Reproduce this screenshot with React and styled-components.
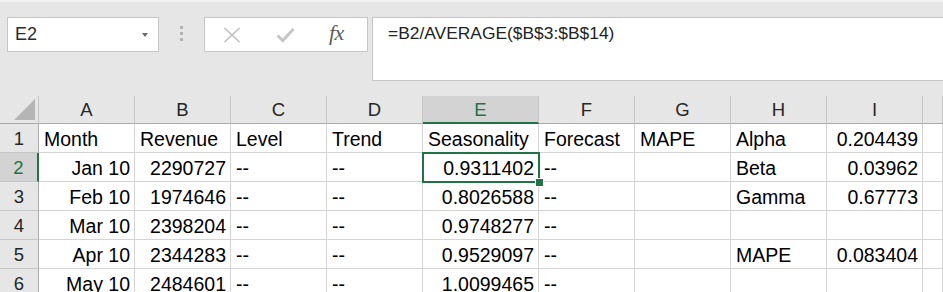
import * as React from "react";
import styled, { createGlobalStyle } from "styled-components";

const GlobalStyle = createGlobalStyle`
  html, body {
    margin: 0;
    padding: 0;
    background: #fff;
    overflow: hidden;
  }
  body {
    font-family: "Liberation Sans", Arial, sans-serif;
  }
`;

const columns = ["A", "B", "C", "D", "E", "F", "G", "H", "I", ""];

// [text, align] per cell, "r" = right aligned
const rows = [
  [["Month"], ["Revenue"], ["Level"], ["Trend"], ["Seasonality"], ["Forecast"], ["MAPE"], ["Alpha"], ["0.204439", "r"], [""]],
  [["Jan 10", "r"], ["2290727", "r"], ["--"], ["--"], ["0.9311402", "r"], ["--"], [""], ["Beta"], ["0.03962", "r"], [""]],
  [["Feb 10", "r"], ["1974646", "r"], ["--"], ["--"], ["0.8026588", "r"], ["--"], [""], ["Gamma"], ["0.67773", "r"], [""]],
  [["Mar 10", "r"], ["2398204", "r"], ["--"], ["--"], ["0.9748277", "r"], ["--"], [""], [""], [""], [""]],
  [["Apr 10", "r"], ["2344283", "r"], ["--"], ["--"], ["0.9529097", "r"], ["--"], [""], ["MAPE"], ["0.083404", "r"], [""]],
  [["May 10", "r"], ["2484601", "r"], ["--"], ["--"], ["1.0099465", "r"], ["--"], [""], [""], [""], [""]],
];

function App() {
  return (
    <Wrapper>
      <GlobalStyle />
      <Toolbar>
        <NameBox>
          <NameText>E2</NameText>
          <DropArrow />
        </NameBox>
        <Grip>
          <Dot />
          <Dot />
          <Dot />
        </Grip>
        <ButtonBox>
          <IconButton>
            <svg width="18" height="16" viewBox="0 0 18 16">
              <path d="M1.5 1 L16.5 15 M16.5 1 L1.5 15" stroke="#bfbfbf" strokeWidth="1.6" fill="none" />
            </svg>
          </IconButton>
          <IconButton>
            <svg width="19" height="16" viewBox="0 0 19 16">
              <path d="M1.5 8.5 L6.8 13.5 L17.5 2" stroke="#c6c6c6" strokeWidth="3" fill="none" />
            </svg>
          </IconButton>
          <FxButton>fx</FxButton>
        </ButtonBox>
        <FormulaInput>=B2/AVERAGE($B$3:$B$14)</FormulaInput>
      </Toolbar>
      <Sheet>
        <Corner>
          <CornerTriangle />
        </Corner>
        {columns.map((c, i) => (
          <ColHeader key={c + i} $active={c === "E"}>
            {c}
          </ColHeader>
        ))}
        {rows.map((row, r) => (
          <React.Fragment key={r}>
            <RowHeader $active={r === 1}>{r + 1}</RowHeader>
            {row.map(([text, align], c) => (
              <Cell key={c} $right={align === "r"}>
                {text}
                {r === 1 && c === 4 && (
                  <ActiveFrame>
                    <FillHandle />
                  </ActiveFrame>
                )}
              </Cell>
            ))}
          </React.Fragment>
        ))}
      </Sheet>
    </Wrapper>
  );
}

const Wrapper = styled.div`
  width: 943px;
  height: 292px;
  overflow: hidden;
  background: #fff;
`;

const Toolbar = styled.div`
  display: flex;
  align-items: flex-start;
  height: 96px;
  box-sizing: border-box;
  padding-top: 15px;
  background: #e6e6e6;
  border-top: 2px solid #f1f1f1;
`;

const NameBox = styled.div`
  display: flex;
  align-items: center;
  justify-content: space-between;
  box-sizing: border-box;
  margin-left: 7px;
  width: 152px;
  height: 35px;
  padding: 0 10px 0 7px;
  background: #fff;
  border: 1px solid #c6c6c6;
`;

const NameText = styled.span`
  font-size: 18px;
  color: #2b2b2b;
`;

const DropArrow = styled.span`
  width: 0;
  height: 0;
  border-left: 3.5px solid transparent;
  border-right: 3.5px solid transparent;
  border-top: 4px solid #6a6a6a;
`;

const Grip = styled.div`
  display: flex;
  flex-direction: column;
  align-items: center;
  gap: 3px;
  width: 45px;
  padding-top: 9px;
`;

const Dot = styled.span`
  width: 3px;
  height: 3px;
  background: #b3b3b3;
`;

const ButtonBox = styled.div`
  display: flex;
  align-items: center;
  box-sizing: border-box;
  width: 164px;
  height: 35px;
  padding-left: 18px;
  gap: 35px;
  background: #fff;
  border: 1px solid #c6c6c6;
`;

const IconButton = styled.span`
  display: flex;
  align-items: center;
  justify-content: center;
`;

const FxButton = styled.span`
  font-family: "Liberation Serif", "Times New Roman", serif;
  font-style: italic;
  font-size: 22px;
  color: #5c5c5c;
  margin-top: -3px;
  margin-left: -1px;
  letter-spacing: -0.5px;
`;

const FormulaInput = styled.div`
  flex: 1;
  box-sizing: border-box;
  margin-left: 4px;
  height: 64px;
  padding: 4px 0 0 15px;
  background: #fff;
  border: 1px solid #c6c6c6;
  border-right: none;
  font-size: 17.4px;
  line-height: 22px;
  color: #222;
`;

const Sheet = styled.div`
  display: grid;
  grid-template-columns: 39px repeat(4, 96px) 116px repeat(4, 96px) 1fr;
  grid-template-rows: 28px repeat(6, 29px);
`;

const Corner = styled.div`
  position: relative;
  box-sizing: border-box;
  background: #e6e6e6;
  border-right: 1px solid #c6c6c6;
  border-bottom: 1px solid #ababab;
`;

const CornerTriangle = styled.div`
  position: absolute;
  right: 3px;
  bottom: 3px;
  width: 0;
  height: 0;
  border-left: 21px solid transparent;
  border-bottom: 21px solid #b5b5b5;
`;

const ColHeader = styled.div`
  display: flex;
  align-items: flex-end;
  justify-content: center;
  box-sizing: border-box;
  font-size: 18.5px;
  line-height: 22px;
  color: ${(p) => (p.$active ? "#217346" : "#262626")};
  background: ${(p) => (p.$active ? "#d3d3d3" : "#e6e6e6")};
  border-right: 1px solid #c6c6c6;
  border-bottom: ${(p) => (p.$active ? "2px solid #217346" : "1px solid #ababab")};
  padding-bottom: ${(p) => (p.$active ? "1px" : "2px")};
`;

const RowHeader = styled.div`
  display: flex;
  align-items: flex-end;
  justify-content: center;
  box-sizing: border-box;
  padding-bottom: 2px;
  font-size: 18.5px;
  line-height: 22px;
  color: ${(p) => (p.$active ? "#217346" : "#262626")};
  background: ${(p) => (p.$active ? "#d3d3d3" : "#e6e6e6")};
  border-right: ${(p) => (p.$active ? "2px solid #217346" : "1px solid #ababab")};
  border-bottom: 1px solid #c6c6c6;
`;

const Cell = styled.div`
  position: relative;
  display: flex;
  align-items: flex-end;
  justify-content: ${(p) => (p.$right ? "flex-end" : "flex-start")};
  box-sizing: border-box;
  padding: 0 4px 1px 5px;
  font-size: 19.5px;
  line-height: 23px;
  color: #000;
  white-space: nowrap;
  border-right: 1px solid #d4d4d4;
  border-bottom: 1px solid #d4d4d4;
`;

const ActiveFrame = styled.div`
  position: absolute;
  z-index: 2;
  left: -1px;
  top: -1px;
  right: -2px;
  bottom: -2px;
  border: 2px solid #217346;
  pointer-events: none;
`;

const FillHandle = styled.div`
  position: absolute;
  right: -5px;
  bottom: -5px;
  width: 7px;
  height: 7px;
  background: #217346;
  box-shadow: 0 0 0 1px #fff;
`;

export default App;
